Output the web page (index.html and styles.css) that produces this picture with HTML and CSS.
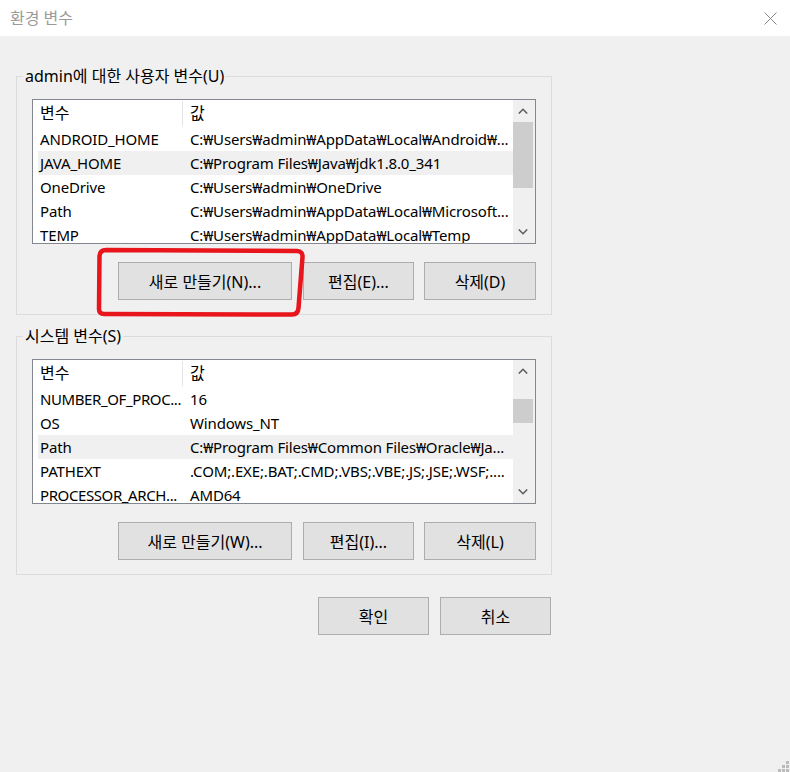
FILE: index.html
```html
<!DOCTYPE html>
<html lang="ko">
<head>
<meta charset="utf-8">
<title>환경 변수</title>
<link rel="stylesheet" href="styles.css">
</head>
<body>
<div class="titlebar">
  <span class="title">환경 변수</span>
  <svg class="close" width="13" height="13" viewBox="0 0 13 13"><path d="M0.5 0.5 L12.5 12.5 M12.5 0.5 L0.5 12.5" stroke="#8a8a8a" stroke-width="1" fill="none"/></svg>
</div>
<div class="content">
  <section class="group">
    <div class="legend">admin에 대한 사용자 변수(U)</div>
    <div class="list">
      <div class="table">
        <div class="row head"><div class="c1">변수</div><div class="c2">값</div></div>
        <div class="row"><div class="c1">ANDROID_HOME</div><div class="c2">C:₩Users₩admin₩AppData₩Local₩Android₩...</div></div>
        <div class="row sel"><div class="c1">JAVA_HOME</div><div class="c2">C:₩Program Files₩Java₩jdk1.8.0_341</div></div>
        <div class="row"><div class="c1">OneDrive</div><div class="c2">C:₩Users₩admin₩OneDrive</div></div>
        <div class="row"><div class="c1">Path</div><div class="c2">C:₩Users₩admin₩AppData₩Local₩Microsoft...</div></div>
        <div class="row"><div class="c1">TEMP</div><div class="c2">C:₩Users₩admin₩AppData₩Local₩Temp</div></div>
      </div>
      <div class="scrollbar">
        <div class="sb-btn"><svg width="10" height="6" viewBox="0 0 10 6"><polyline points="0.8,5.5 5,1.3 9.2,5.5" fill="none" stroke="#606060" stroke-width="1.6"/></svg></div>
        <div class="track"><div class="thumb thumb-user"></div></div>
        <div class="sb-btn"><svg width="10" height="6" viewBox="0 0 10 6"><polyline points="0.8,0.5 5,4.7 9.2,0.5" fill="none" stroke="#606060" stroke-width="1.6"/></svg></div>
      </div>
    </div>
    <div class="buttons">
      <div class="btn btn-new">새로 만들기(N)...</div>
      <div class="btn btn-edit">편집(E)...</div>
      <div class="btn btn-del">삭제(D)</div>
    </div>
  </section>

  <section class="group">
    <div class="legend">시스템 변수(S)</div>
    <div class="list">
      <div class="table">
        <div class="row head"><div class="c1">변수</div><div class="c2">값</div></div>
        <div class="row"><div class="c1 tight">NUMBER_OF_PROC...</div><div class="c2">16</div></div>
        <div class="row"><div class="c1">OS</div><div class="c2">Windows_NT</div></div>
        <div class="row sel"><div class="c1">Path</div><div class="c2">C:₩Program Files₩Common Files₩Oracle₩Ja...</div></div>
        <div class="row"><div class="c1">PATHEXT</div><div class="c2">.COM;.EXE;.BAT;.CMD;.VBS;.VBE;.JS;.JSE;.WSF;....</div></div>
        <div class="row"><div class="c1 tight">PROCESSOR_ARCH...</div><div class="c2">AMD64</div></div>
      </div>
      <div class="scrollbar">
        <div class="sb-btn"><svg width="10" height="6" viewBox="0 0 10 6"><polyline points="0.8,5.5 5,1.3 9.2,5.5" fill="none" stroke="#606060" stroke-width="1.6"/></svg></div>
        <div class="track"><div class="thumb thumb-sys"></div></div>
        <div class="sb-btn"><svg width="10" height="6" viewBox="0 0 10 6"><polyline points="0.8,0.5 5,4.7 9.2,0.5" fill="none" stroke="#606060" stroke-width="1.6"/></svg></div>
      </div>
    </div>
    <div class="buttons">
      <div class="btn btn-new">새로 만들기(W)...</div>
      <div class="btn btn-edit">편집(I)...</div>
      <div class="btn btn-del">삭제(L)</div>
    </div>
  </section>

  <div class="footer">
    <div class="btn btn-ok">확인</div>
    <div class="btn btn-ok">취소</div>
  </div>
</div>

<svg class="grip" width="12" height="12" viewBox="0 0 12 12">
  <rect x="8" y="0" width="3" height="3" fill="#bcbcbc"/>
  <rect x="4" y="4" width="3" height="3" fill="#bcbcbc"/>
  <rect x="8" y="4" width="3" height="3" fill="#bcbcbc"/>
  <rect x="0" y="8" width="3" height="3" fill="#bcbcbc"/>
  <rect x="4" y="8" width="3" height="3" fill="#bcbcbc"/>
  <rect x="8" y="8" width="3" height="3" fill="#bcbcbc"/>
</svg>

<svg class="annotation" width="790" height="772" viewBox="0 0 790 772">
  <path d="M106 250 L297 251 Q303 251.5 302.5 257 L298.5 308 Q298 314.5 292 314.5 L104 314 Q99 314 99 309 L99.5 256 Q100 250 106 250 Z" fill="none" stroke="#e8151d" stroke-width="4.5" stroke-linejoin="round"/>
</svg>
</body>
</html>
```

FILE: styles.css
```css
* {
  box-sizing: border-box;
}

html,
body {
  margin: 0;
  padding: 0;
}

body {
  width: 790px;
  height: 772px;
  position: relative;
  overflow: hidden;
  background: #f0f0f0;
  color: #000;
  font-family: "Noto Sans", "Noto Sans CJK KR", sans-serif;
  font-size: 15px;
}

.titlebar {
  height: 36px;
  background: #fff;
  display: flex;
  align-items: center;
  justify-content: space-between;
  padding: 0 13px 0 10px;
}

.title {
  color: #9a9a9a;
  line-height: 20px;
  font-size: 16px;
}

.close {
  display: block;
}

.content {
  padding: 40px 0 0 16px;
}

.group {
  width: 536px;
  border: 1px solid #dcdcdc;
  padding: 0 15px 14px;
}

.group + .group {
  margin-top: 21px;
}

.legend {
  width: max-content;
  margin: -11px 0 0 -9px;
  padding: 0 2px;
  line-height: 20px;
  font-size: 16px;
  background: #f0f0f0;
}

.list {
  margin-top: 13px;
  height: 145px;
  border: 1px solid #828790;
  background: #fff;
  display: flex;
  overflow: hidden;
}

.table {
  flex: 1;
  min-width: 0;
  padding-left: 5px;
  overflow: hidden;
}

.row {
  display: flex;
  height: 24px;
  line-height: 24px;
  letter-spacing: -0.15px;
}

.row.head {
  height: 27px;
  padding: 1px 0;
  line-height: 25px;
  font-size: 16px;
  letter-spacing: 0;
}

.c1 {
  width: 145px;
  flex: none;
  padding-left: 2px;
  white-space: nowrap;
  overflow: hidden;
}

.c1.tight {
  letter-spacing: -0.4px;
}

.head .c1 {
  border-right: 1px solid #e5e5e5;
}

.c2 {
  flex: 1;
  min-width: 0;
  padding-left: 7px;
  white-space: nowrap;
  overflow: hidden;
}

.row.sel {
  background: #f0f0f0;
}

.scrollbar {
  width: 22px;
  flex: none;
  background: #f0f0f0;
  display: flex;
  flex-direction: column;
}

.sb-btn {
  height: 22px;
  flex: none;
  display: flex;
  align-items: center;
  justify-content: center;
  padding-right: 2px;
}

.sb-btn svg {
  display: block;
}

.track {
  flex: 1;
}

.thumb {
  background: #cdcdcd;
  margin-right: 2px;
}

.thumb-user {
  height: 66px;
}

.thumb-sys {
  margin-top: 17px;
  height: 24px;
}

.buttons {
  display: flex;
  justify-content: flex-end;
  gap: 10px;
  margin-top: 18px;
}

.btn {
  height: 38px;
  background: #e1e1e1;
  border: 1px solid #adadad;
  display: flex;
  align-items: center;
  justify-content: center;
  white-space: nowrap;
  font-size: 16px;
}

.btn-new {
  width: 174px;
  margin-right: 1px;
}

.btn-edit {
  width: 111px;
}

.btn-del {
  width: 112px;
}

.footer {
  width: 535px;
  margin-top: 22px;
  display: flex;
  justify-content: flex-end;
  gap: 11px;
}

.btn-ok {
  width: 111px;
}

.grip {
  position: absolute;
  left: 778px;
  top: 761px;
}

.annotation {
  position: absolute;
  left: 0;
  top: 0;
  pointer-events: none;
}
```
